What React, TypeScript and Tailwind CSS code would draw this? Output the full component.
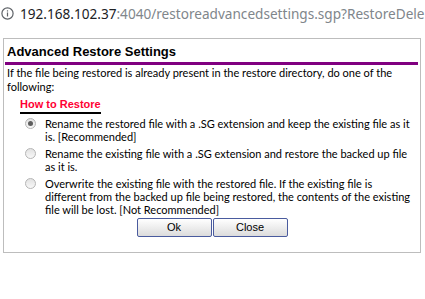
import { useState } from "react";

const options = [
  {
    id: "renameRestored",
    label:
      "Rename the restored file with a .SG extension and keep the existing file as it is. [Recommended]",
  },
  {
    id: "renameExisting",
    label:
      "Rename the existing file with a .SG extension and restore the backed up file as it is.",
  },
  {
    id: "overwrite",
    label:
      "Overwrite the existing file with the restored file. If the existing file is different from the backed up file being restored, the contents of the existing file will be lost. [Not Recommended]",
  },
];

function InfoIcon() {
  return (
    <svg width="13" height="13" viewBox="0 0 13 13" className="shrink-0">
      <circle cx="6.5" cy="6.5" r="5.6" fill="none" stroke="#5f6368" strokeWidth="1.2" />
      <rect x="5.9" y="5.5" width="1.2" height="4" fill="#5f6368" />
      <rect x="5.9" y="3.3" width="1.2" height="1.2" fill="#5f6368" />
    </svg>
  );
}

export default function App() {
  const [selected, setSelected] = useState("renameRestored");

  return (
    <div className="w-[425px] h-[299px] bg-white overflow-hidden">
      <div className="h-[27px] flex items-center gap-[6px] pl-[1px] whitespace-nowrap overflow-hidden font-['Noto_Sans',sans-serif] text-[13.6px] leading-none">
        <InfoIcon />
        <span>
          <span className="text-[#202124]">192.168.102.37</span>
          <span className="text-[#80868b]">:4040/restoreadvancedsettings.sgp?RestoreDele</span>
        </span>
      </div>

      <div className="ml-[3px] mt-[11px] w-[418px] h-[215px] border border-[#bdbdbd] px-[1px]">
        <h1 className="pl-[2px] pt-[6px] pb-[3px] font-['Liberation_Sans',sans-serif] font-bold text-[13px] leading-[14px] text-black">
          Advanced Restore Settings
        </h1>
        <div className="h-[3px] bg-[#800080] mr-[1px]" />

        <p className="pl-[2px] pt-[1px] pr-[8px] font-['Lato',sans-serif] text-[11px] leading-[14px] text-black">
          If the file being restored is already present in the restore directory, do one of the following:
        </p>

        <div className="pl-[15px] mt-[4px] flex">
          <span className="font-['Liberation_Sans',sans-serif] font-bold text-[11px] leading-[13px] text-[#ff0033] border-b-2 border-black pb-[1px]">
            How to Restore
          </span>
        </div>

        <div className="mt-[3px] pl-[20px] pr-[8px] flex flex-col gap-[4px] font-['Lato',sans-serif] text-[11px] leading-[13px] text-black">
          {options.map((o) => (
            <label key={o.id} className="flex items-start gap-[9px] cursor-pointer">
              <span className="mt-[1px] w-[11px] h-[11px] shrink-0 rounded-full border border-[#b5b5b5] bg-gradient-to-b from-[#e2e2e2] to-[#f8f8f8] flex items-center justify-center">
                {selected === o.id && <span className="w-[5px] h-[5px] rounded-full bg-[#5e5e5e]" />}
              </span>
              <input
                type="radio"
                name="restore"
                className="hidden"
                checked={selected === o.id}
                onChange={() => setSelected(o.id)}
              />
              <span>{o.label}</span>
            </label>
          ))}
        </div>

        <div className="mt-[2px] flex justify-center gap-[1px] font-['Liberation_Sans',sans-serif] text-[11px]">
          <button className="w-[75px] h-[19px] rounded-[2px] border border-[#4a5b9e] bg-gradient-to-b from-white to-[#dcdcdc] text-black leading-none">
            Ok
          </button>
          <button className="w-[75px] h-[19px] rounded-[2px] border border-[#4a5b9e] bg-gradient-to-b from-white to-[#dcdcdc] text-black leading-none">
            Close
          </button>
        </div>
      </div>
    </div>
  );
}
